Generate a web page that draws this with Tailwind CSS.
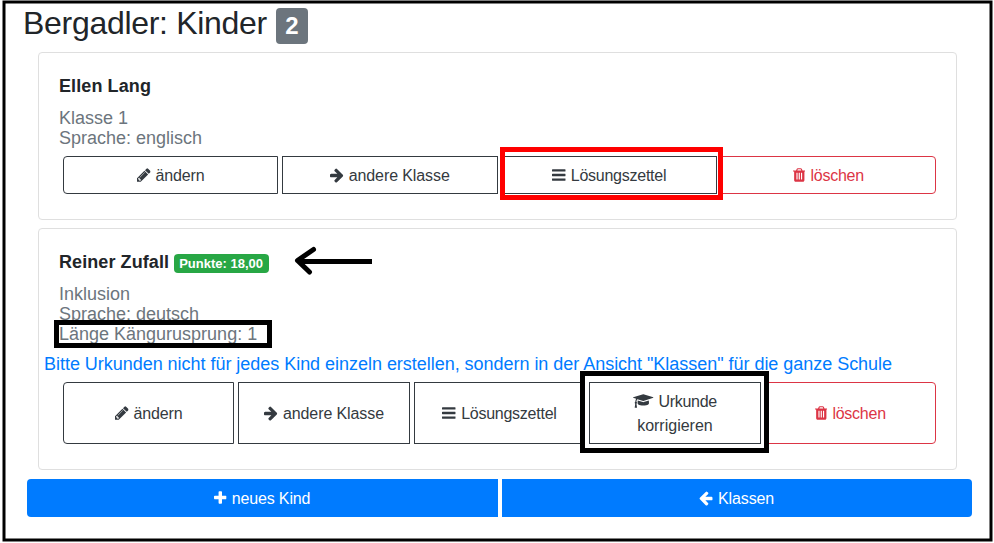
<!DOCTYPE html>
<html lang="de">
<head>
<meta charset="utf-8">
<title>Bergadler: Kinder</title>
<script src="https://cdn.jsdelivr.net/npm/@tailwindcss/browser@4"></script>
</head>
<body class="bg-white">
<svg class="hidden">
  <symbol id="pencil" viewBox="128 0 1536 1792"><path d="M491 1536l91-91-235-235-91 91v107h128v128h107zm523-928q0-22-22-22-10 0-17 7l-542 542q-7 7-7 17 0 22 22 22 10 0 17-7l542-542q7-7 7-17zm-54-192l416 416-832 832h-416v-416zm683 96q0 53-37 90l-166 166-416-416 166-165q36-38 90-38 53 0 91 38l235 234q37 39 37 91z"/></symbol>
  <symbol id="right" viewBox="128 0 1536 1792"><path d="M1600 960q0 54-37 91l-651 651q-39 37-91 37-51 0-90-37l-75-75q-38-38-38-91t38-91l293-293h-704q-52 0-84.5-37.5t-32.5-90.5v-128q0-53 32.5-90.5t84.5-37.5h704l-293-294q-38-36-38-90t38-90l75-75q38-38 90-38 53 0 91 38l651 651q37 35 37 90z"/></symbol>
  <symbol id="left" viewBox="128 0 1536 1792"><path d="M1664 896v128q0 53-32.5 90.5t-84.5 37.5h-704l293 294q38 36 38 90t-38 90l-75 76q-37 37-90 37-52 0-91-37l-651-652q-37-37-37-90 0-52 37-91l651-650q38-38 91-38 52 0 90 38l75 74q38 38 38 91t-38 91l-293 293h704q52 0 84.5 37.5t32.5 90.5z"/></symbol>
  <symbol id="bars" viewBox="128 0 1536 1792"><path d="M1664 1344v128q0 26-19 45t-45 19h-1408q-26 0-45-19t-19-45v-128q0-26 19-45t45-19h1408q26 0 45 19t19 45zm0-512v128q0 26-19 45t-45 19h-1408q-26 0-45-19t-19-45v-128q0-26 19-45t45-19h1408q26 0 45 19t19 45zm0-512v128q0 26-19 45t-45 19h-1408q-26 0-45-19t-19-45v-128q0-26 19-45t45-19h1408q26 0 45 19t19 45z"/></symbol>
  <symbol id="plus" viewBox="192 0 1408 1792"><path d="M1600 736v192q0 40-28 68t-68 28h-416v416q0 40-28 68t-68 28h-192q-40 0-68-28t-28-68v-416h-416q-40 0-68-28t-28-68v-192q0-40 28-68t68-28h416v-416q0-40 28-68t68-28h192q40 0 68 28t28 68v416h416q40 0 68 28t28 68z"/></symbol>
  <symbol id="trash" viewBox="192 0 1408 1792"><path d="M704 1376v-704q0-14-9-23t-23-9h-64q-14 0-23 9t-9 23v704q0 14 9 23t23 9h64q14 0 23-9t9-23zm256 0v-704q0-14-9-23t-23-9h-64q-14 0-23 9t-9 23v704q0 14 9 23t23 9h64q14 0 23-9t9-23zm256 0v-704q0-14-9-23t-23-9h-64q-14 0-23 9t-9 23v704q0 14 9 23t23 9h64q14 0 23-9t9-23zm-544-992h448l-48-117q-7-9-17-11h-317q-10 2-17 11zm928 32v64q0 14-9 23t-23 9h-96v948q0 83-47 143.5t-113 60.5h-832q-66 0-113-58.5t-47-141.5v-952h-96q-14 0-23-9t-9-23v-64q0-14 9-23t23-9h309l70-167q15-37 54-63t79-26h320q40 0 79 26t54 63l70 167h309q14 0 23 9t9 23z"/></symbol>
  <symbol id="cap" viewBox="0 0 2304 1792"><path d="M1774 836l18 316q4 69-82 128t-235 93.5-323 34.5-323-34.5-235-93.5-82-128l18-316 574 181q22 7 48 7t48-7zm530-324q0 23-22 31l-1120 352q-4 1-10 1t-10-1l-652-206q-43 34-71 111.5t-34 178.5q63 36 63 109 0 69-58 107l58 433q2 14-8 25-9 11-24 11h-192q-15 0-24-11-10-11-8-25l58-433q-58-38-58-107 0-73 65-111 11-207 98-330l-333-104q-22-8-22-31t22-31l1120-352q4-1 10-1t10 1l1120 352q22 8 22 31z"/></symbol>
</svg>
<main class="relative h-[543px] w-[994px] overflow-hidden pt-1 font-['Liberation_Sans',Arial,sans-serif] text-[#212529]">
  <h1 class="flex h-12 items-start pl-[23px] text-[32px] leading-[38px] tracking-[-0.3px]">Bergadler: Kinder<span class="ml-[9px] mt-1 w-8 rounded bg-[#6c757d] py-1.5 text-center text-2xl leading-6 font-bold tracking-normal text-white">2</span></h1>

  <section class="ml-[38px] h-[168px] w-[919px] rounded border border-[#dfdfdf] p-5 text-lg leading-5">
    <h2 class="mb-2 h-[27px] leading-[27px] font-bold tracking-[0.1px]">Ellen Lang</h2>
    <p class="mb-2 text-[#6c757d]">Klasse 1<br>Sprache: englisch</p>
    <div class="flex h-[38px] gap-1 pl-1 text-base leading-6 text-[#343a40]">
      <button class="flex flex-1 items-center justify-center gap-[5px] rounded-l border border-[#343a40] pt-0.5 tracking-[-0.15px]"><svg class="-mt-0.5 h-4 w-[13.71px] fill-current"><use href="#pencil"/></svg>ändern</button>
      <button class="flex flex-1 items-center justify-center gap-[5px] border border-[#343a40] pt-0.5 tracking-[-0.1px]"><svg class="-mt-0.5 h-4 w-[13.71px] fill-current"><use href="#right"/></svg>andere Klasse</button>
      <button class="flex flex-1 items-center justify-center gap-[5px] border border-[#343a40] pt-0.5 tracking-[-0.25px]"><svg class="-mt-0.5 h-4 w-[13.71px] fill-current"><use href="#bars"/></svg>Lösungszettel</button>
      <button class="flex flex-1 items-center justify-center gap-[5px] rounded-r border border-[#dc3545] pt-0.5 tracking-[-0.25px] text-[#dc3545]"><svg class="-mt-0.5 h-4 w-[12.57px] fill-current"><use href="#trash"/></svg>löschen</button>
    </div>
  </section>

  <section class="mt-2 ml-[38px] h-[242px] w-[919px] rounded border border-[#dfdfdf] p-5 text-lg leading-5">
    <h2 class="mb-2 flex h-[27px] leading-[27px] font-bold tracking-[0.08px]">Reiner Zufall<span class="ml-[5px] mt-[5px] h-[19px] w-[95px] rounded bg-[#28a745] pr-px text-center text-[13px] leading-[19px] tracking-normal text-white">Punkte: 18,00</span></h2>
    <p class="text-[#6c757d]">Inklusion<br>Sprache: deutsch<br>Länge Kängurusprung: 1</p>
    <p class="mt-2.5 mb-2 -ml-[15px] whitespace-nowrap tracking-[-0.03px] text-[#007bff]">Bitte Urkunden nicht für jedes Kind einzeln erstellen, sondern in der Ansicht "Klassen" für die ganze Schule</p>
    <div class="flex h-[62px] gap-1 pl-1 text-base leading-6 text-[#343a40]">
      <button class="flex flex-1 items-center justify-center gap-[5px] rounded-l border border-[#343a40] pt-0.5 tracking-[-0.15px]"><svg class="-mt-0.5 h-4 w-[13.71px] fill-current"><use href="#pencil"/></svg>ändern</button>
      <button class="flex flex-1 items-center justify-center gap-[5px] border border-[#343a40] pt-0.5 tracking-[-0.1px]"><svg class="-mt-0.5 h-4 w-[13.71px] fill-current"><use href="#right"/></svg>andere Klasse</button>
      <button class="flex flex-1 items-center justify-center gap-[5px] border border-[#343a40] pt-0.5 tracking-[-0.25px]"><svg class="-mt-0.5 h-4 w-[13.71px] fill-current"><use href="#bars"/></svg>Lösungszettel</button>
      <button class="flex flex-1 flex-col items-center justify-center border border-[#343a40] pt-0.5"><span class="flex items-center gap-[5px] tracking-[-0.3px]"><svg class="-mt-0.5 h-4 w-[20.57px] fill-current"><use href="#cap"/></svg>Urkunde</span><span>korrigieren</span></button>
      <button class="flex flex-1 items-center justify-center gap-[5px] rounded-r border border-[#dc3545] pt-0.5 tracking-[-0.25px] text-[#dc3545]"><svg class="-mt-0.5 h-4 w-[12.57px] fill-current"><use href="#trash"/></svg>löschen</button>
    </div>
  </section>

  <div class="mt-[9px] ml-[27px] flex h-[38px] w-[945px] gap-1 text-white">
    <button class="flex flex-1 items-center justify-center gap-[5px] rounded-l bg-[#007bff] pt-0.5 tracking-[-0.15px]"><svg class="-mt-0.5 h-4 w-[12.57px] fill-current"><use href="#plus"/></svg>neues Kind</button>
    <button class="flex flex-1 items-center justify-center gap-[5px] rounded-r bg-[#007bff] pt-0.5 tracking-[-0.12px]"><svg class="-mt-0.5 h-4 w-[13.71px] fill-current"><use href="#left"/></svg>Klassen</button>
  </div>

  <!-- Annotations drawn over the page -->
  <svg class="pointer-events-none absolute inset-0" width="994" height="543" fill="none" stroke="#000">
    <rect x="4" y="2" width="987" height="538" stroke-width="3"/>
    <rect x="502.5" y="149.5" width="218" height="48" stroke="#f00" stroke-width="5"/>
    <rect x="56.5" y="322.5" width="213" height="23" stroke-width="5"/>
    <rect x="582.5" y="373.5" width="184" height="77" stroke-width="5"/>
    <path d="M372 261.5H298" stroke-width="5"/>
    <path d="M313.500 249.500L297.500 260.500L309.500 272" stroke-width="5" stroke-linejoin="round" stroke-linecap="round"/>
  </svg>
</main>
</body>
</html>
